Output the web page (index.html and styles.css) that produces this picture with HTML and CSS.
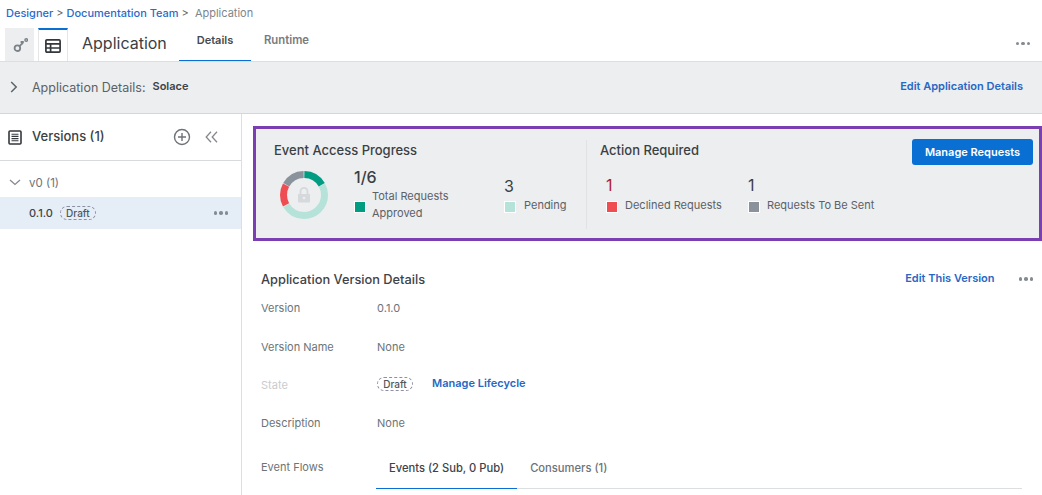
FILE: index.html
```html
<!DOCTYPE html>
<html lang="en">
<head>
    <meta charset="UTF-8">
    <title>Application</title>
    <link rel="stylesheet" href="styles.css">
</head>
<body>
<div class="crumbs">
    <a href="#">Designer</a><span class="sep">&gt;</span><a href="#">Documentation Team</a><span class="sep sep2">&gt;</span><span class="crumb-now">Application</span>
</div>
<div class="topbar">
    <div class="view-btn view-off">
        <svg width="16" height="16" viewBox="0 0 16 16" fill="none" stroke="#7c8288" stroke-width="1.8">
            <circle cx="5.4" cy="11.2" r="2.8"/>
            <path d="M7.4 9.2l3.6-3.4M8.6 5h3.2"/>
            <circle cx="14.2" cy="3" r="1.3" stroke-width="1.4"/>
        </svg>
    </div>
    <div class="view-btn view-on">
        <svg width="16" height="14" viewBox="0 0 16 14" fill="none" stroke="#33383d" stroke-width="1.7">
            <rect x="0.9" y="0.9" width="14.2" height="12.2" rx="1"/>
            <path d="M0.9 4.9h14.2M0.9 9h14.2M5.6 4.9v8.2"/>
        </svg>
    </div>
    <h1 class="app-title">Application</h1>
    <a class="tab tab-on" href="#">Details</a>
    <a class="tab" href="#">Runtime</a>
    <div class="dots top-dots"><i></i><i></i><i></i></div>
</div>
<div class="detailbar">
    <svg class="detail-arrow" width="8" height="12" viewBox="0 0 8 12" fill="none" stroke="#5d6368" stroke-width="1.5"><path d="M1.2 1l5 5-5 5"/></svg>
    <span class="detail-label">Application Details:</span>
    <span class="detail-val">Solace</span>
    <a class="link detail-edit" href="#">Edit Application Details</a>
</div>
<div class="content">
    <div class="sidebar">
        <div class="side-head">
            <svg width="14" height="15" viewBox="0 0 14 15" fill="none" stroke="#33383d" stroke-width="1.6">
                <rect x="1" y="1" width="12" height="13" rx="1"/>
                <path d="M3.5 4.2h7M3.5 6.4h7M3.5 8.6h7M3.5 10.8h7" stroke-width="1.1"/>
            </svg>
            <span class="side-title">Versions (1)</span>
            <svg class="side-plus" width="18" height="18" viewBox="0 0 18 18" fill="none" stroke="#6d7378" stroke-width="1.4">
                <circle cx="9" cy="9" r="7.5"/>
                <path d="M9 5v8M5 9h8"/>
            </svg>
            <svg class="side-back" width="13" height="12" viewBox="0 0 13 12" fill="none" stroke="#85898e" stroke-width="1.3">
                <path d="M6 .8L1.2 6 6 11.2M12 .8L7.2 6 12 11.2"/>
            </svg>
        </div>
        <div class="group-row">
            <svg width="12" height="7" viewBox="0 0 12 7" fill="none" stroke="#85898e" stroke-width="1.3"><path d="M1 1l5 4.5L11 1"/></svg>
            <span>v0 (1)</span>
        </div>
        <div class="version-row">
            <span class="version-num">0.1.0</span>
            <span class="pill">Draft</span>
            <div class="dots"><i></i><i></i><i></i></div>
        </div>
    </div>
    <div class="main">
        <div class="summary">
            <div class="progress">
                <h2 class="sum-title">Event Access Progress</h2>
                <div class="progress-body">
                    <div class="donut">
                        <svg width="50" height="50" viewBox="0 0 50 50" fill="none" stroke-width="7">
                            <g transform="rotate(-90 25 25)">
                                <circle cx="25" cy="25" r="20.5" pathLength="360" stroke="#b5e2d9" stroke-dasharray="178 182" stroke-dashoffset="-61"/>
                                <circle cx="25" cy="25" r="20.5" pathLength="360" stroke="#009d82" stroke-dasharray="59 301" stroke-dashoffset="-1"/>
                                <circle cx="25" cy="25" r="20.5" pathLength="360" stroke="#ee4d52" stroke-dasharray="58 302" stroke-dashoffset="-241"/>
                                <circle cx="25" cy="25" r="20.5" pathLength="360" stroke="#8a929b" stroke-dasharray="59 301" stroke-dashoffset="-300"/>
                            </g>
                            <path d="M21.5 24v-2.6a3.5 3.5 0 0 1 7 0V24" stroke="#d6d9dc" stroke-width="1.8"/>
                            <rect x="19" y="24" width="12" height="8.6" rx="1" fill="#d6d9dc" stroke="none"/>
                            <circle cx="25" cy="28" r="1.3" fill="#eceef0" stroke="none"/>
                        </svg>
                    </div>
                    <div class="stat stat-total">
                        <div class="stat-num big">1/6</div>
                        <div class="stat-key">
                            <span class="swatch sw-green"></span>
                            <span class="stat-text two-line">Total Requests Approved</span>
                        </div>
                    </div>
                    <div class="stat stat-pending">
                        <div class="stat-num">3</div>
                        <div class="stat-key">
                            <span class="swatch sw-teal"></span>
                            <span class="stat-text">Pending</span>
                        </div>
                    </div>
                </div>
            </div>
            <div class="action">
                <h2 class="sum-title">Action Required</h2>
                <div class="action-body">
                    <div class="stat stat-declined">
                        <div class="stat-num red">1</div>
                        <div class="stat-key">
                            <span class="swatch sw-red"></span>
                            <span class="stat-text">Declined Requests</span>
                        </div>
                    </div>
                    <div class="stat">
                        <div class="stat-num">1</div>
                        <div class="stat-key">
                            <span class="swatch sw-gray"></span>
                            <span class="stat-text">Requests To Be Sent</span>
                        </div>
                    </div>
                </div>
            </div>
            <button class="primary-btn">Manage Requests</button>
        </div>
        <div class="version-details">
            <div class="vd-head">
                <h2 class="vd-title">Application Version Details</h2>
                <a class="link" href="#">Edit This Version</a>
                <div class="dots vd-dots"><i></i><i></i><i></i></div>
            </div>
            <div class="vd-row row-version"><span class="vd-label">Version</span><span class="vd-val">0.1.0</span></div>
            <div class="vd-row row-name"><span class="vd-label">Version Name</span><span class="vd-val">None</span></div>
            <div class="vd-row row-state"><span class="vd-label muted">State</span><span class="pill">Draft</span><a class="link state-link" href="#">Manage Lifecycle</a></div>
            <div class="vd-row row-desc"><span class="vd-label">Description</span><span class="vd-val">None</span></div>
            <div class="vd-row row-flows">
                <span class="vd-label flows-label">Event Flows</span>
                <div class="subtabs">
                    <a class="subtab subtab-on" href="#">Events (2 Sub, 0 Pub)</a>
                    <a class="subtab" href="#">Consumers (1)</a>
                </div>
            </div>
        </div>
    </div>
</div>
</body>
</html>
```

FILE: styles.css
```css
*{margin:0;padding:0;box-sizing:border-box;}
html,body{height:495px;overflow:hidden;}
body{background:#fff;font-family:"Inter","Liberation Sans",sans-serif;font-size:11px;color:#555b61;}
a{text-decoration:none;}
.link{color:#2768c4;font-size:11px;font-weight:600;}

.crumbs{display:flex;align-items:center;height:28px;padding:0 0 2px 6px;font-size:11px;}
.crumbs a{color:#2a6bc9;font-weight:500;}
.sep{margin:0 3px;color:#666;}
.sep2{margin-right:6px;}
.crumb-now{color:#80858a;}

.topbar{display:flex;height:34px;padding-left:5px;border-bottom:1px solid #dcdee0;}
.view-btn{display:flex;align-items:center;justify-content:center;width:30px;height:33px;}
.view-off{width:29px;background:#eceef0;}
.view-on{margin-left:4px;border-top:2px solid #0a6fd3;border-right:1px solid #e4e6e8;border-left:1px solid #e4e6e8;}
.app-title{width:97px;margin-left:14px;font-size:16px;line-height:30px;font-weight:400;color:#3a3f44;}
.tab{width:72px;height:33px;font-size:11px;line-height:24px;font-weight:600;color:#777c81;text-align:center;}
.tab+.tab{width:auto;margin-left:13px;font-size:11.3px;}
.tab-on{color:#444a50;border-bottom:1px solid #0a6fd3;}
.dots{display:flex;gap:2px;margin-left:auto;}
.dots i{width:3.5px;height:3.5px;border-radius:50%;background:#858b92;}
.top-dots{align-self:center;margin-right:12px;margin-bottom:2px;}

.detailbar{display:flex;align-items:center;height:52px;padding:0 19px 1px 10px;background:#eceef0;border-bottom:1px solid #d4d6d9;}
.detail-label{margin-left:14px;font-size:12.5px;color:#5b6167;}
.detail-val{margin:-2px 0 0 7px;font-size:11px;font-weight:600;color:#3e4348;}
.detail-edit{margin:-2px 0 0 auto;}

.content{display:flex;height:381px;}
.sidebar{flex:none;width:242px;border-right:1px solid #dcdee0;}
.side-head{display:flex;align-items:center;height:47px;padding:0 23px 0 8px;border-bottom:1px solid #d8dadc;}
.side-title{margin:-2px 0 0 10px;font-size:13px;font-weight:500;color:#3a3f44;}
.side-plus{margin-left:auto;}
.side-back{margin-left:14px;}
.group-row{display:flex;align-items:center;gap:8px;height:36px;padding:7px 0 0 9px;color:#6d7378;font-size:11.5px;}
.version-row{display:flex;align-items:center;height:32px;padding-left:29px;background:#e5eef7;padding-right:13px;}
.version-num{margin-right:7px;font-size:11px;font-weight:500;color:#3e4348;}
.pill{display:inline-block;width:36px;height:14px;border:1px dashed #8d8fa3;border-radius:7px;font-size:10px;line-height:12px;text-align:center;color:#50565c;font-weight:500;}

.main{flex:1;padding:12px 0 0 11px;min-width:0;}
.summary{display:flex;height:115px;border:3px solid #7a3fb0;background:#eceef0;padding:0 6px 0 18px;}
.sum-title{font-size:13px;line-height:16px;font-weight:500;color:#3a3f44;}
.progress{width:313px;margin:11px 0;padding-top:2px;border-right:1px solid #e0e2e4;height:89px;}
.progress-body{display:flex;}
.donut{width:50px;margin:12px 0 0 5px;height:50px;}
.stat{display:flex;flex-direction:column;}
.stat-num{font-size:16px;line-height:20px;color:#3a3f44;}
.big{font-weight:500;}
.red{color:#a8242c;}
.stat-key{display:flex;align-items:center;gap:7px;margin-top:1px;font-size:11px;}
.stat-text{line-height:17px;color:#5b6167;}
.two-line{width:90px;}
.swatch{flex:none;width:12px;height:12px;margin-top:3px;border:1px solid #fff;}
.sw-green{background:#009d82;}
.sw-teal{background:#b5e2d9;}
.sw-red{background:#ee4d52;}
.sw-gray{background:#8a929b;}
.stat-total{margin:9px 0 0 25px;width:150px;}
.stat-total .stat-key{gap:6px;}
.stat-pending{margin-top:18px;}
.stat-pending .stat-key{gap:8px;}
.action{flex:1;margin:13px 0 0 13px;}
.action-body{display:flex;margin:17px 0 0 6px;}
.action .stat-key{gap:7px;}
.action .stat-num{margin-bottom:1px;}
.stat-declined{width:142px;}
.primary-btn{flex:none;align-self:flex-start;width:121px;height:26px;margin-top:10px;border:none;border-radius:3px;background:#0a6fd3;color:#fff;font:600 11px "Inter","Liberation Sans",sans-serif;}

.version-details{padding:28px 20px 0 8px;}
.vd-head{display:flex;align-items:center;height:20px;margin-right:-20px;}
.vd-title{font-size:12.8px;font-weight:500;color:#3e4348;}
.vd-head .link{margin:-3px 0 0 auto;}
.vd-dots{margin:0 9px 0 24px;}
.vd-row{display:flex;align-items:center;font-size:11px;}
.vd-label{width:116px;flex:none;color:#6d7378;}
.vd-label.muted{color:#c9ccd0;}
.vd-val{color:#6d7378;}
.row-version{margin-top:10px;height:18px;}
.row-name{margin-top:21px;height:18px;}
.row-state{margin-top:20px;height:18px;}
.state-link{margin:-4px 0 0 19px;}
.row-state .pill{margin-top:-3px;}
.row-desc{margin-top:20px;height:18px;}
.row-flows{margin-top:21px;align-items:flex-start;}
.flows-label{width:115px;margin-top:7px;}
.subtabs{display:flex;flex:1;height:36px;border-bottom:1px solid #dcdee0;}
.subtab{height:36px;padding:7px 13px 0;font-size:11.2px;line-height:16px;font-weight:500;color:#6d7378;}
.subtab-on{color:#3e4348;border-bottom:1px solid #0a6fd3;}
```
